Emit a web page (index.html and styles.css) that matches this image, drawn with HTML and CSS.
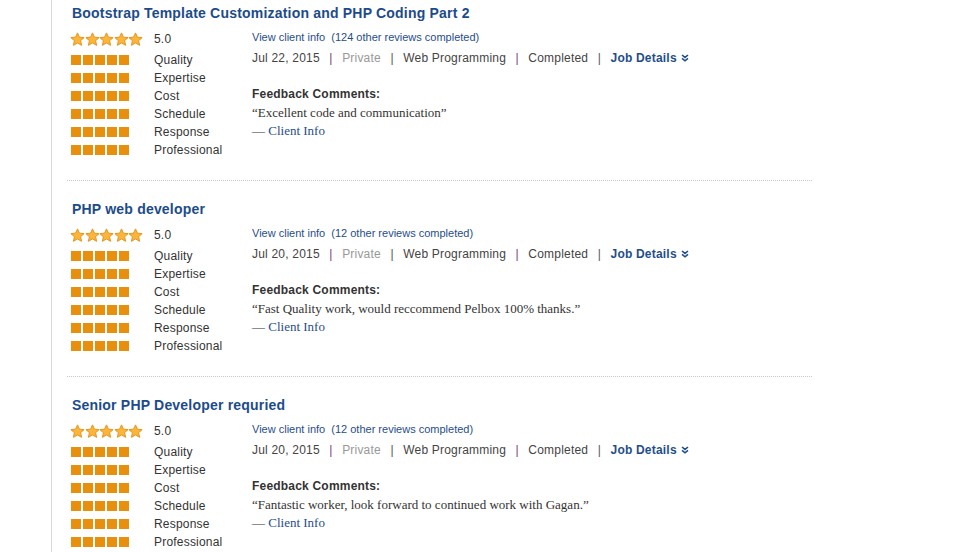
FILE: index.html
```html
<!DOCTYPE html>
<html>
<head>
<meta charset="utf-8">
<link rel="stylesheet" href="styles.css">
</head>
<body>
<svg width="0" height="0" class="defs">
  <defs>
    <symbol id="star" viewBox="0 0 20 20">
      <path d="M10 1.2 L12.6 6.9 L18.8 7.5 L14.1 11.6 L15.5 17.8 L10 14.6 L4.5 17.8 L5.9 11.6 L1.2 7.5 L7.4 6.9 Z" fill="#fbb53a" stroke="#e2931c" stroke-width="1.3" stroke-linejoin="round"/>
    </symbol>
    <symbol id="chev" viewBox="0 0 8 8">
      <path d="M1 1 L4 3.4 L7 1 M1 4.4 L4 6.8 L7 4.4" fill="none" stroke="#1f4e8c" stroke-width="1.6"/>
    </symbol>
  </defs>
</svg>
<div class="page">
  <div class="review">
    <h2 class="title">Bootstrap Template Customization and PHP Coding Part 2</h2>
    <div class="body">
      <div class="scores">
        <div class="overall">
          <span class="stars"><svg><use href="#star"/></svg><svg><use href="#star"/></svg><svg><use href="#star"/></svg><svg><use href="#star"/></svg><svg><use href="#star"/></svg></span>
          <span class="val">5.0</span>
        </div>
        <div class="row"><span class="bar"><i></i><i></i><i></i><i></i><i></i></span><span class="lbl">Quality</span></div>
        <div class="row"><span class="bar"><i></i><i></i><i></i><i></i><i></i></span><span class="lbl">Expertise</span></div>
        <div class="row"><span class="bar"><i></i><i></i><i></i><i></i><i></i></span><span class="lbl">Cost</span></div>
        <div class="row"><span class="bar"><i></i><i></i><i></i><i></i><i></i></span><span class="lbl">Schedule</span></div>
        <div class="row"><span class="bar"><i></i><i></i><i></i><i></i><i></i></span><span class="lbl">Response</span></div>
        <div class="row"><span class="bar"><i></i><i></i><i></i><i></i><i></i></span><span class="lbl">Professional</span></div>
      </div>
      <div class="info">
        <div class="client"><a>View client info</a>&nbsp; (124 other reviews completed)</div>
        <div class="meta">Jul 22, 2015<span class="sep p">|</span><span class="muted">Private</span><span class="sep">|</span>Web Programming<span class="sep p">|</span>Completed<span class="sep">|</span><a class="jd">Job Details <svg><use href="#chev"/></svg></a></div>
        <div class="fb">Feedback Comments:</div>
        <div class="quote">“Excellent code and communication”</div>
        <div class="quote">— <a>Client Info</a></div>
      </div>
    </div>
  </div>
  <div class="review">
    <h2 class="title">PHP web developer</h2>
    <div class="body">
      <div class="scores">
        <div class="overall">
          <span class="stars"><svg><use href="#star"/></svg><svg><use href="#star"/></svg><svg><use href="#star"/></svg><svg><use href="#star"/></svg><svg><use href="#star"/></svg></span>
          <span class="val">5.0</span>
        </div>
        <div class="row"><span class="bar"><i></i><i></i><i></i><i></i><i></i></span><span class="lbl">Quality</span></div>
        <div class="row"><span class="bar"><i></i><i></i><i></i><i></i><i></i></span><span class="lbl">Expertise</span></div>
        <div class="row"><span class="bar"><i></i><i></i><i></i><i></i><i></i></span><span class="lbl">Cost</span></div>
        <div class="row"><span class="bar"><i></i><i></i><i></i><i></i><i></i></span><span class="lbl">Schedule</span></div>
        <div class="row"><span class="bar"><i></i><i></i><i></i><i></i><i></i></span><span class="lbl">Response</span></div>
        <div class="row"><span class="bar"><i></i><i></i><i></i><i></i><i></i></span><span class="lbl">Professional</span></div>
      </div>
      <div class="info">
        <div class="client"><a>View client info</a>&nbsp; (12 other reviews completed)</div>
        <div class="meta">Jul 20, 2015<span class="sep p">|</span><span class="muted">Private</span><span class="sep">|</span>Web Programming<span class="sep p">|</span>Completed<span class="sep">|</span><a class="jd">Job Details <svg><use href="#chev"/></svg></a></div>
        <div class="fb">Feedback Comments:</div>
        <div class="quote">“Fast Quality work, would reccommend Pelbox 100% thanks.”</div>
        <div class="quote">— <a>Client Info</a></div>
      </div>
    </div>
  </div>
  <div class="review">
    <h2 class="title">Senior PHP Developer requried</h2>
    <div class="body">
      <div class="scores">
        <div class="overall">
          <span class="stars"><svg><use href="#star"/></svg><svg><use href="#star"/></svg><svg><use href="#star"/></svg><svg><use href="#star"/></svg><svg><use href="#star"/></svg></span>
          <span class="val">5.0</span>
        </div>
        <div class="row"><span class="bar"><i></i><i></i><i></i><i></i><i></i></span><span class="lbl">Quality</span></div>
        <div class="row"><span class="bar"><i></i><i></i><i></i><i></i><i></i></span><span class="lbl">Expertise</span></div>
        <div class="row"><span class="bar"><i></i><i></i><i></i><i></i><i></i></span><span class="lbl">Cost</span></div>
        <div class="row"><span class="bar"><i></i><i></i><i></i><i></i><i></i></span><span class="lbl">Schedule</span></div>
        <div class="row"><span class="bar"><i></i><i></i><i></i><i></i><i></i></span><span class="lbl">Response</span></div>
        <div class="row"><span class="bar"><i></i><i></i><i></i><i></i><i></i></span><span class="lbl">Professional</span></div>
      </div>
      <div class="info">
        <div class="client"><a>View client info</a>&nbsp; (12 other reviews completed)</div>
        <div class="meta">Jul 20, 2015<span class="sep p">|</span><span class="muted">Private</span><span class="sep">|</span>Web Programming<span class="sep p">|</span>Completed<span class="sep">|</span><a class="jd">Job Details <svg><use href="#chev"/></svg></a></div>
        <div class="fb">Feedback Comments:</div>
        <div class="quote">“Fantastic worker, look forward to continued work with Gagan.”</div>
        <div class="quote">— <a>Client Info</a></div>
      </div>
    </div>
  </div>
</div>
</body>
</html>
```
FILE: styles.css
```css
html, body {
  margin: 0;
  padding: 0;
  background: #fff;
  height: 100%;
  overflow: hidden;
}
body {
  font-family: "Liberation Sans", Arial, sans-serif;
  color: #333;
}
.defs {
  position: absolute;
  width: 0;
  height: 0;
}
.page {
  margin-left: 51px;
  border-left: 1px solid #d9d9d9;
  min-height: 100%;
  padding: 4px 0 0 15px;
  width: 745px;
}
.review {
  padding: 0 5px 21px 5px;
  border-bottom: 1px dotted #c8c8c8;
  margin-bottom: 19px;
}
.title {
  margin: 0 0 8px 0;
  font-size: 14px;
  line-height: 18px;
  font-weight: bold;
  color: #1c4b8c;
  letter-spacing: 0.2px;
}
.body {
  display: flex;
}
.scores {
  width: 180px;
  flex: none;
}
.overall {
  display: flex;
  align-items: center;
  height: 18px;
  margin-bottom: 3px;
}
.stars {
  display: flex;
  width: 84px;
  margin-left: -2px;
}
.stars svg {
  width: 15px;
  height: 15px;
  margin-right: -0.4px;
}
.val {
  font-size: 12px;
  color: #333;
  letter-spacing: 0.2px;
}
.row {
  display: flex;
  align-items: center;
  height: 18px;
}
.bar {
  display: flex;
  gap: 2px;
  width: 83px;
  margin-left: -1px;
}
.bar i {
  display: block;
  width: 10px;
  height: 10px;
  background: #e98f0e;
}
.lbl {
  font-size: 12px;
  color: #333;
  letter-spacing: 0.2px;
}
.info {
  flex: 1;
  margin-top: -2px;
}
.client {
  font-size: 11px;
  line-height: 18px;
  color: #1f4e8c;
}
.client a {
  color: #1f4e8c;
}
.meta {
  margin-top: 3px;
  font-size: 12px;
  line-height: 18px;
  color: #444;
  letter-spacing: 0.2px;
}
.sep {
  padding: 0 9.5px;
  color: #555;
}
.sep.p {
  color: #7a3d7a;
}
.muted {
  color: #999;
}
.jd {
  color: #1f4e8c;
  font-weight: bold;
}
.jd svg {
  width: 8px;
  height: 8px;
  margin-left: 1px;
  vertical-align: 0px;
}
.fb {
  margin-top: 18px;
  margin-bottom: 1px;
  font-size: 12px;
  line-height: 18px;
  font-weight: bold;
  color: #333;
  letter-spacing: 0.2px;
}
.quote {
  font-family: "Liberation Serif", "Times New Roman", serif;
  font-size: 13px;
  line-height: 18px;
  color: #333;
}
.quote a {
  color: #1f4e8c;
}
```
